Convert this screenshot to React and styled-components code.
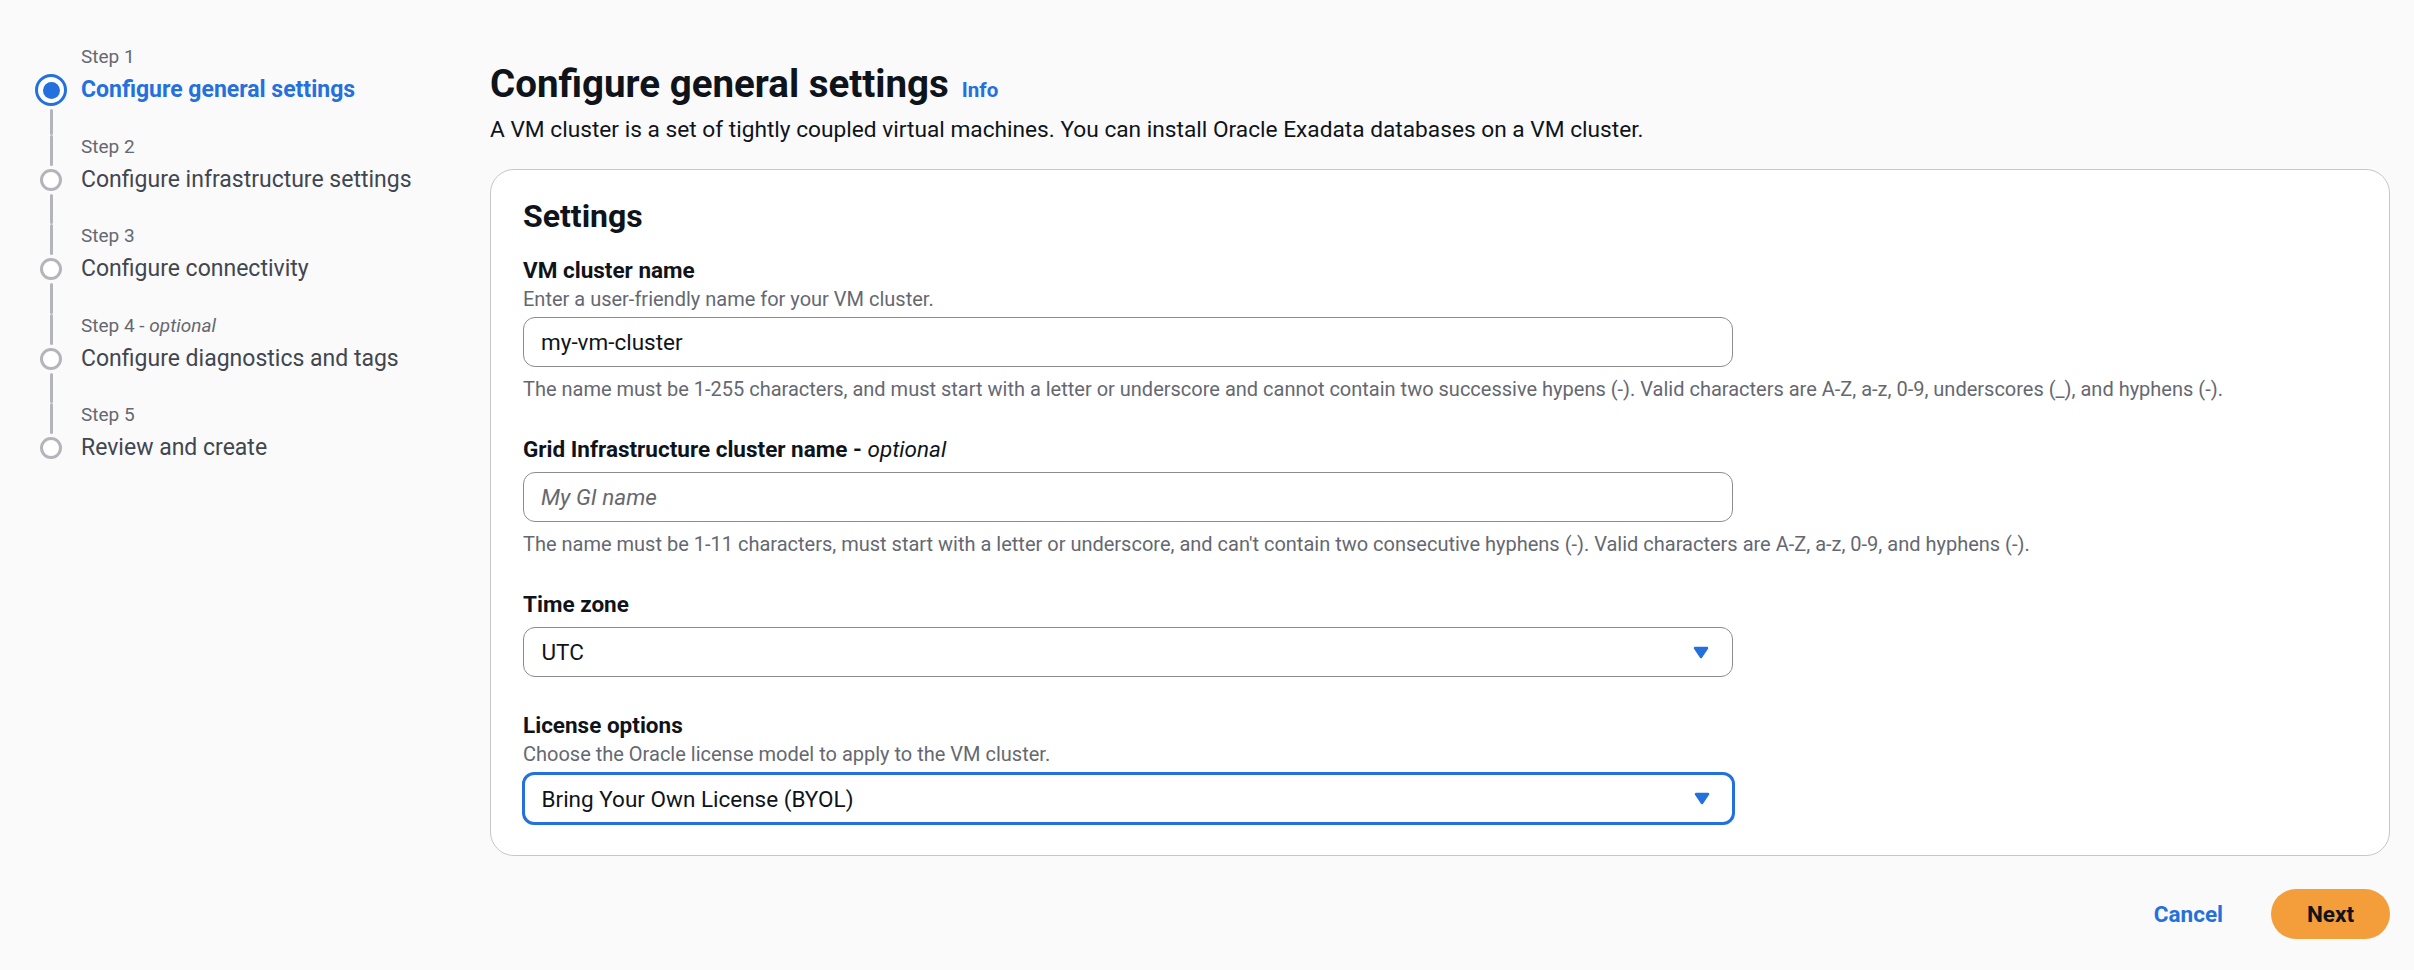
import React from "react";
import styled, { createGlobalStyle } from "styled-components";

const BLUE = "#2470dd";
const TEXT = "#0f141a";
const MUTED = "#656871";

const GlobalStyle = createGlobalStyle`
  html, body {
    margin: 0;
    padding: 0;
    background: #fafafa;
  }
  body {
    font-family: Roboto, "Noto Sans", "Liberation Sans", sans-serif;
    color: ${TEXT};
    -webkit-font-smoothing: antialiased;
  }
  *, *::before, *::after { box-sizing: border-box; }
`;

const Page = styled.div`
  display: flex;
  min-height: 970px;
`;

const Nav = styled.nav`
  flex: 0 0 490px;
  padding: 45px 0 0 35px;
`;

const StepList = styled.ol`
  list-style: none;
  margin: 0;
  padding: 0;
  display: flex;
  flex-direction: column;
`;

const StepItem = styled.li`
  display: grid;
  grid-template-columns: 32px 1fr;
  column-gap: 14px;
`;

const Rail = styled.div`
  display: flex;
  flex-direction: column;
  align-items: center;
`;

const RailLine = styled.span`
  width: 3px;
  border-radius: 2px;
  background: ${(p) => (p.$hidden ? "transparent" : "#b4b4bb")};
  flex: ${(p) => (p.$grow ? "1 1 auto" : "0 0 auto")};
  height: ${(p) => (p.$height ? `${p.$height}px` : "auto")};
  margin: ${(p) => (p.$grow ? "3px 0 0" : "0 0 3px")};
`;

const Dot = styled.span`
  flex: 0 0 auto;
  width: ${(p) => (p.$active ? 32 : 22)}px;
  height: ${(p) => (p.$active ? 32 : 22)}px;
  border-radius: 50%;
  border: 3px solid ${(p) => (p.$active ? BLUE : "#b4b4bb")};
  background: #ffffff;
  display: flex;
  align-items: center;
  justify-content: center;
`;

const DotCore = styled.span`
  width: 17px;
  height: 17px;
  border-radius: 50%;
  background: ${BLUE};
`;

const StepText = styled.div`
  display: flex;
  flex-direction: column;
  padding-bottom: ${(p) => (p.$last ? 0 : 28.5)}px;
`;

const StepLabel = styled.span`
  font-size: 19px;
  line-height: 24px;
  color: ${MUTED};
  white-space: nowrap;
`;

const StepTitle = styled.span`
  margin-top: 5px;
  font-size: 23px;
  line-height: 32px;
  white-space: nowrap;
  font-weight: ${(p) => (p.$active ? 700 : 400)};
  color: ${(p) => (p.$active ? BLUE : "#424650")};
`;

const Main = styled.main`
  flex: 1 1 auto;
  min-width: 0;
  padding: 61px 24px 32px 0;
  display: flex;
  flex-direction: column;
`;

const HeaderRow = styled.div`
  display: flex;
  align-items: baseline;
  gap: 13px;
`;

const H1 = styled.h1`
  margin: 0;
  font-size: 38.5px;
  line-height: 45px;
  font-weight: 700;
  color: ${TEXT};
`;

const InfoLink = styled.a`
  font-size: 20.5px;
  font-weight: 700;
  color: ${BLUE};
  text-decoration: none;
`;

const PageDescription = styled.p`
  margin: 9px 0 0;
  font-size: 22.7px;
  line-height: 30px;
  color: ${TEXT};
`;

const Container = styled.section`
  margin-top: 24px;
  background: #ffffff;
  border: 1px solid #c6c6cd;
  border-radius: 24px;
  padding: 27px 32px 30px;
`;

const H2 = styled.h2`
  margin: 0;
  font-size: 32px;
  line-height: 38px;
  font-weight: 700;
  color: ${TEXT};
`;

const Form = styled.div`
  margin-top: 20px;
  display: flex;
  flex-direction: column;
  gap: 33px;
`;

const Field = styled.div`
  display: flex;
  flex-direction: column;
`;

const Label = styled.label`
  font-size: 22.5px;
  line-height: 30px;
  font-weight: 700;
  color: ${TEXT};

  i {
    font-weight: 400;
  }
`;

const FieldDescription = styled.span`
  margin-top: 2px;
  font-size: 20px;
  line-height: 24px;
  color: ${MUTED};
`;

const ControlWrap = styled.div`
  margin-top: ${(p) => (p.$afterDesc ? 6 : 8)}px;
  width: 66%;
`;

const TextInput = styled.input`
  display: block;
  width: 100%;
  height: 50px;
  border: 1.5px solid #8c8c94;
  border-radius: 12px;
  background: #ffffff;
  padding: 0 17px;
  font-family: inherit;
  font-size: 22.5px;
  color: ${TEXT};
  outline: none;

  &::placeholder {
    color: ${MUTED};
    font-style: italic;
  }
`;

const SelectBox = styled.button`
  display: flex;
  align-items: center;
  justify-content: space-between;
  height: ${(p) => (p.$focused ? 53 : 50)}px;
  border: ${(p) => (p.$focused ? `3px solid ${BLUE}` : "1.5px solid #8c8c94")};
  border-radius: 12px;
  background: #ffffff;
  padding: ${(p) => (p.$focused ? "0 22px 0 17px" : "0 23px 0 17.5px")};
  font-family: inherit;
  font-size: 22.5px;
  color: ${TEXT};
  text-align: left;
  cursor: pointer;
  margin-left: ${(p) => (p.$focused ? -1.5 : 0)}px;
  width: ${(p) => (p.$focused ? "calc(100% + 3px)" : "100%")};
`;

const Constraint = styled.span`
  margin-top: 10px;
  font-size: 20px;
  line-height: 24px;
  color: ${MUTED};
  white-space: nowrap;
`;

const Actions = styled.div`
  margin-top: 33px;
  display: flex;
  justify-content: flex-end;
  align-items: center;
  gap: 24px;
`;

const LinkButton = styled.button`
  height: 50px;
  padding: 0 24px;
  border: none;
  background: transparent;
  font-family: inherit;
  font-size: 22.5px;
  font-weight: 700;
  color: ${BLUE};
  cursor: pointer;
`;

const PrimaryButton = styled.button`
  height: 50px;
  min-width: 119px;
  padding: 0 33px;
  border: none;
  border-radius: 25px;
  background: #f49d3b;
  font-family: inherit;
  font-size: 22.5px;
  font-weight: 700;
  color: ${TEXT};
  cursor: pointer;
`;

const Caret = () => (
  <svg width="16" height="13" viewBox="0 0 16 13" aria-hidden="true">
    <path
      d="M2 2 H14 L8 11 Z"
      fill={BLUE}
      stroke={BLUE}
      strokeWidth="2.5"
      strokeLinejoin="round"
    />
  </svg>
);

const steps = [
  { label: "Step 1", title: "Configure general settings" },
  { label: "Step 2", title: "Configure infrastructure settings" },
  { label: "Step 3", title: "Configure connectivity" },
  { label: "Step 4", optional: true, title: "Configure diagnostics and tags" },
  { label: "Step 5", title: "Review and create" },
];

function Stepper({ active }) {
  return (
    <StepList>
      {steps.map((s, i) => {
        const isActive = i === active;
        const size = isActive ? 32 : 22;
        const last = i === steps.length - 1;
        return (
          <StepItem key={s.label}>
            <Rail>
              <RailLine $hidden={i === 0} $height={29 + (32 - size) / 2 - 3} />
              <Dot $active={isActive}>{isActive && <DotCore />}</Dot>
              <RailLine $hidden={last} $grow />
            </Rail>
            <StepText $last={last}>
              <StepLabel>
                {s.label}
                {s.optional && (
                  <>
                    {" - "}
                    <i>optional</i>
                  </>
                )}
              </StepLabel>
              <StepTitle $active={isActive}>{s.title}</StepTitle>
            </StepText>
          </StepItem>
        );
      })}
    </StepList>
  );
}

export default function App() {
  return (
    <>
      <GlobalStyle />
      <Page>
        <Nav>
          <Stepper active={0} />
        </Nav>
        <Main>
          <HeaderRow>
            <H1>Configure general settings</H1>
            <InfoLink href="#">Info</InfoLink>
          </HeaderRow>
          <PageDescription>
            A VM cluster is a set of tightly coupled virtual machines. You can install Oracle Exadata
            databases on a VM cluster.
          </PageDescription>

          <Container>
            <H2>Settings</H2>
            <Form>
              <Field>
                <Label>VM cluster name</Label>
                <FieldDescription>Enter a user-friendly name for your VM cluster.</FieldDescription>
                <ControlWrap $afterDesc>
                  <TextInput defaultValue="my-vm-cluster" />
                </ControlWrap>
                <Constraint>
                  The name must be 1-255 characters, and must start with a letter or underscore and
                  cannot contain two successive hypens (-). Valid characters are A-Z, a-z, 0-9,
                  underscores (_), and hyphens (-).
                </Constraint>
              </Field>

              <Field>
                <Label>
                  Grid Infrastructure cluster name - <i>optional</i>
                </Label>
                <ControlWrap>
                  <TextInput placeholder="My GI name" />
                </ControlWrap>
                <Constraint>
                  The name must be 1-11 characters, must start with a letter or underscore, and can't
                  contain two consecutive hyphens (-). Valid characters are A-Z, a-z, 0-9, and hyphens
                  (-).
                </Constraint>
              </Field>

              <Field>
                <Label>Time zone</Label>
                <ControlWrap>
                  <SelectBox type="button">
                    <span>UTC</span>
                    <Caret />
                  </SelectBox>
                </ControlWrap>
              </Field>

              <Field>
                <Label>License options</Label>
                <FieldDescription>
                  Choose the Oracle license model to apply to the VM cluster.
                </FieldDescription>
                <ControlWrap $afterDesc>
                  <SelectBox type="button" $focused>
                    <span>Bring Your Own License (BYOL)</span>
                    <Caret />
                  </SelectBox>
                </ControlWrap>
              </Field>
            </Form>
          </Container>

          <Actions>
            <LinkButton type="button">Cancel</LinkButton>
            <PrimaryButton type="button">Next</PrimaryButton>
          </Actions>
        </Main>
      </Page>
    </>
  );
}
